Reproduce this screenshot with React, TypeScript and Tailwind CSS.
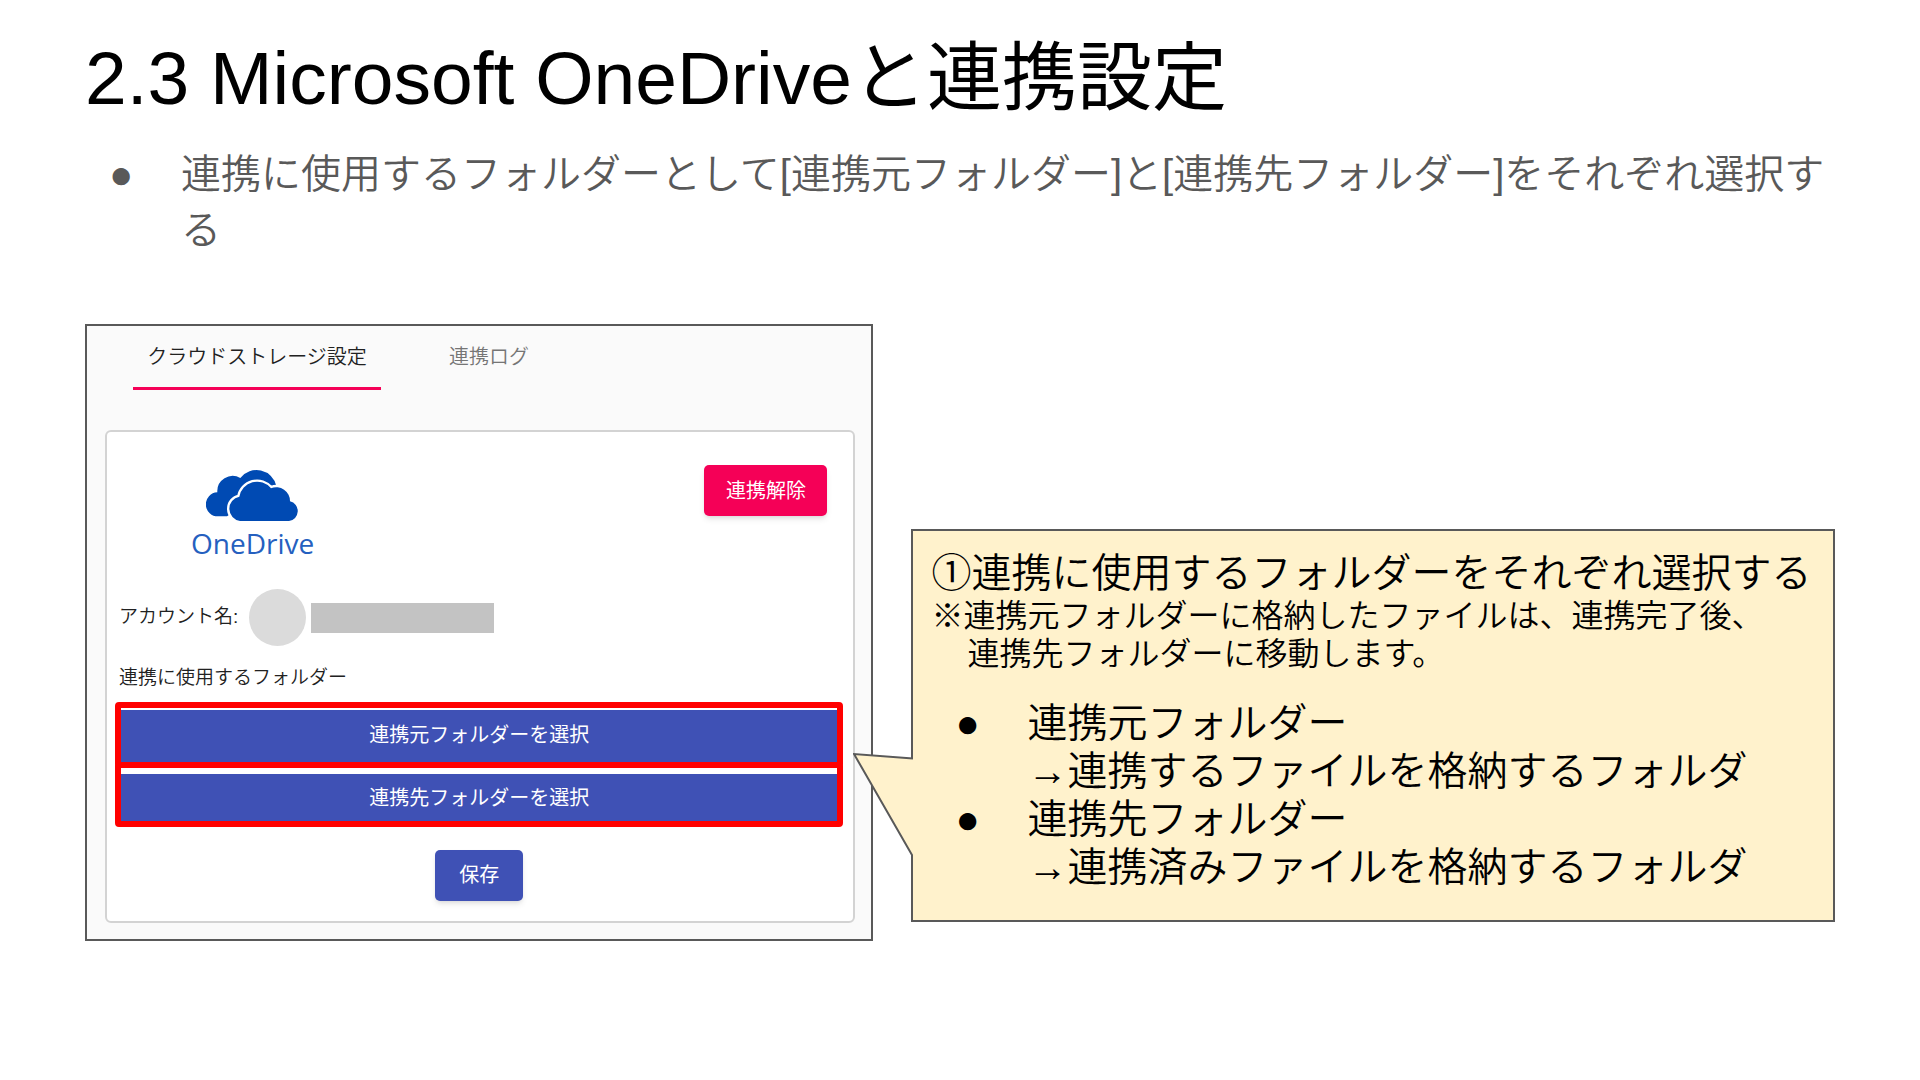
import React, { useState } from 'react';
import clsx from 'clsx';

const tabs = [
  { id: 'settings', label: 'クラウドストレージ設定', width: 'w-[248px]' },
  { id: 'log', label: '連携ログ', width: 'w-[216px]' },
];

const folderNotes = [
  { title: '連携元フォルダー', detail: '→連携するファイルを格納するフォルダ' },
  { title: '連携先フォルダー', detail: '→連携済みファイルを格納するフォルダ' },
];

const OneDriveLogo: React.FC = () => (
  <div className="flex flex-col items-center text-[#004ab3]">
    <svg viewBox="78 40 279 162" className="w-[93px] h-[54px]" aria-hidden="true">
      <path
        d="M141 188H115A36 36 0 0 1 112 116A46 46 0 0 1 181 73A61 61 0 0 1 289 97L200 150Z"
        fill="currentColor"
      />
      <path
        d="M180 202A37 37 0 0 1 178 129A54 54 0 0 1 273 104A41 41 0 0 1 330 143A30 30 0 0 1 327 202Z"
        fill="currentColor"
        stroke="#fff"
        strokeWidth="14"
        paintOrder="stroke"
      />
    </svg>
    <span className="font-['Open_Sans',sans-serif] text-[28px] leading-[44px] text-[#2560bf]">
      OneDrive
    </span>
  </div>
);

const StoragePanel: React.FC = () => {
  const [activeTab, setActiveTab] = useState('settings');

  return (
    <section className="border-2 border-[#595959] bg-[#fafafa] pr-4 pb-4 pl-[18px]">
      {/* Tabs */}
      <div role="tablist" className="flex pl-7">
        {tabs.map((tab) => (
          <button
            key={tab.id}
            role="tab"
            aria-selected={activeTab === tab.id}
            onClick={() => setActiveTab(tab.id)}
            className={clsx(
              'h-16 border-b-3 text-xl font-[350] whitespace-nowrap',
              tab.width,
              activeTab === tab.id
                ? 'border-[#f50057] text-[#212121]'
                : 'border-transparent text-[#757575]',
            )}
          >
            {tab.label}
          </button>
        ))}
      </div>

      {/* Card */}
      <div className="mt-10 rounded-md border-2 border-[#d3d3d3] bg-white pr-2.5 pb-5 pl-2">
        <div className="flex items-start justify-between pt-[33px] pr-4 pl-[76px]">
          <div className="pt-0.5">
            <OneDriveLogo />
          </div>
          <button className="h-[51px] w-[123px] rounded-[5px] bg-[#f50057] text-xl text-white shadow-md">
            連携解除
          </button>
        </div>

        <div className="mt-6 flex items-center pl-1 text-[19px] font-[350] text-[#212121]">
          <span>アカウント名:</span>
          <span className="ml-[11px] size-[57px] rounded-full bg-[#dbdbdb]" />
          <span className="ml-[5px] h-[30px] w-[183px] bg-[#c3c3c3]" />
        </div>

        <p className="mt-[18px] pl-1 text-[19px] leading-7 font-[350] text-[#212121]">
          連携に使用するフォルダー
        </p>

        {/* Folder pickers */}
        <div className="mt-2.5">
          <div className="rounded-sm border-6 border-[#ff0000] pt-0.5">
            <button className="h-13 w-full bg-[#3f51b5] pb-0.5 text-xl text-white">
              連携元フォルダーを選択
            </button>
          </div>
          <div className="-mt-1.5 rounded-sm border-6 border-[#ff0000] pt-1.5">
            <button className="h-[47px] w-full bg-[#3f51b5] text-xl text-white">
              連携先フォルダーを選択
            </button>
          </div>
        </div>

        <div className="mt-[23px] flex justify-center">
          <button className="h-[51px] w-[88px] rounded-[5px] bg-[#3f51b5] pb-0.5 text-xl text-white shadow-md">
            保存
          </button>
        </div>
      </div>
    </section>
  );
};

const Callout: React.FC = () => (
  <aside className="relative mt-[205px] border-2 border-[#595959] bg-[#fff2cc] px-[18px] pt-[18px] pb-[29px] font-[350] text-black">
    {/* Pointer towards the folder buttons */}
    <svg
      viewBox="0 0 60 108"
      className="absolute top-[220px] left-[-60px] h-[108px] w-[60px]"
      aria-hidden="true"
    >
      <path d="M1 3L60 7.5V104H59Z" fill="#fff2cc" />
      <path d="M60 7.5L1 3L59 104V108" fill="none" stroke="#595959" strokeWidth="2" />
    </svg>
    <h2 className="text-[40px] leading-[48px] font-[350] whitespace-nowrap">
      ①連携に使用するフォルダーをそれぞれ選択する
    </h2>
    <p className="text-[32px] leading-[38px]">
      ※連携元フォルダーに格納したファイルは、連携完了後、
    </p>
    <p className="pl-9 text-[32px] leading-[38px]">連携先フォルダーに移動します。</p>
    <ul className="mt-[26px] text-[40px] leading-[48px]">
      {folderNotes.map((note) => (
        <li key={note.title} className="flex whitespace-nowrap">
          <span className="w-[96px] pl-6">●</span>
          <div>
            {note.title}
            <br />
            {note.detail}
          </div>
        </li>
      ))}
    </ul>
  </aside>
);

export default function App() {
  return (
    <main className="min-h-screen bg-white px-[85px] pt-[30px] font-['Liberation_Sans','Noto_Sans_CJK_JP',sans-serif]">
      <h1 className="text-[75px] leading-[96px] text-black">2.3 Microsoft OneDriveと連携設定</h1>
      <ul className="mt-5 text-[40px] leading-[56px] font-[350] text-[#595959]">
        <li className="flex">
          <span className="w-[96px] shrink-0 pl-6">●</span>
          <span>
            連携に使用するフォルダーとして[連携元フォルダー]と[連携先フォルダー]をそれぞれ選択する
          </span>
        </li>
      </ul>
      <div className="mt-[66px] grid grid-cols-[788fr_923fr] items-start gap-[38px]">
        <StoragePanel />
        <Callout />
      </div>
    </main>
  );
}
